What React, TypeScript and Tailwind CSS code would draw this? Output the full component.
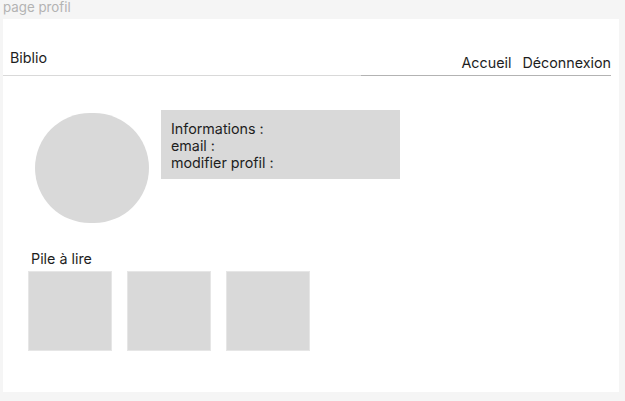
import React from 'react';

// placeholders for the reading pile
const books = [1, 2, 3];

export default function App() {
  return (
    <div className="w-[625px] h-[401px] bg-[#f5f5f5] font-['Inter',sans-serif] text-[#1e1e1e] overflow-hidden">
      <div className="h-[19px] pl-[3px] text-[13.3px] leading-[14px] text-[#b3b3b3]">page profil</div>

      <div className="ml-[3px] w-[616px] h-[373px] bg-white">
        {/* Header */}
        <div className="flex items-end h-[57px] mr-[8px]">
          <div className="flex-1 border-b border-[#d9d9d9] pl-[7px] pb-[9px] text-[14.3px] leading-[17px]">Biblio</div>
          <nav className="w-[250px] flex justify-end gap-[11px] border-b border-[#b3b3b3] pb-[4px] text-[14.3px] leading-[17px]">
            <span>Accueil</span>
            <span>Déconnexion</span>
          </nav>
        </div>

        {/* Profile */}
        <div className="flex items-start gap-[12px] pl-[32px] mt-[34px]">
          <div className="w-[114px] h-[110px] mt-[3px] rounded-full bg-[#d9d9d9]" />
          <div className="w-[239px] h-[69px] bg-[#d9d9d9] pl-[10px] pt-[10px] text-[14.3px] leading-[17px]">
            <p>Informations :</p>
            <p>email :</p>
            <p>modifier profil :</p>
          </div>
        </div>

        {/* Pile à lire */}
        <div className="pl-[25px] mt-[27px]">
          <h2 className="pl-[3px] text-[14.3px] leading-[17px]">Pile à lire</h2>
          <div className="flex gap-[15px] mt-[4px]">
            {books.map((b) => (
              <div key={b} className="w-[84px] h-[80px] bg-[#d9d9d9] border border-[#e6e6e6]" />
            ))}
          </div>
        </div>
      </div>
    </div>
  );
}
